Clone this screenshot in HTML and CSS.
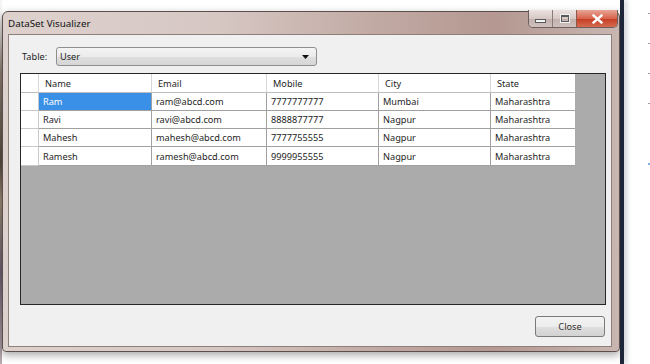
FILE: index.html
```html
<!DOCTYPE html>
<html lang="en">
<head>
    <meta charset="UTF-8">
    <title>DataSet Visualizer</title>
    <link rel="stylesheet" href="styles.css">
</head>
<body>

    <div class="desktop">
        <!-- Strip of the desktop behind the window -->
        <div class="backdrop-left"></div>

        <!-- Dialog window -->
        <div class="window">
            <div class="title-bar">
                <span class="title">DataSet Visualizer</span>
                <div class="caption-buttons">
                    <span class="cap-btn cap-min"><i></i></span>
                    <span class="cap-btn cap-max"><i></i></span>
                    <span class="cap-btn cap-close">
                        <svg width="11" height="10" viewBox="0 0 11 10">
                            <path d="M1.5 1.5 L9.5 8.5 M9.5 1.5 L1.5 8.5" stroke="#fff" stroke-width="2.4" stroke-linecap="square"/>
                        </svg>
                    </span>
                </div>
            </div>

            <div class="client">
                <div class="table-picker">
                    <label class="picker-label">Table:</label>
                    <div class="combo">
                        <span>User</span>
                        <svg class="combo-arrow" width="7" height="4" viewBox="0 0 7 4">
                            <path d="M0 0 H7 L3.5 4 Z" fill="#111"/>
                        </svg>
                    </div>
                </div>

                <!-- Data grid -->
                <div class="grid">
                    <div class="grid-table">
                        <div class="row head">
                            <span class="cell rowhead"></span>
                            <span class="cell c-name">Name</span>
                            <span class="cell c-email">Email</span>
                            <span class="cell c-mobile">Mobile</span>
                            <span class="cell c-city">City</span>
                            <span class="cell c-state">State</span>
                        </div>
                        <div class="row">
                            <span class="cell rowhead"></span>
                            <span class="cell c-name selected">Ram</span>
                            <span class="cell c-email">ram@abcd.com</span>
                            <span class="cell c-mobile">7777777777</span>
                            <span class="cell c-city">Mumbai</span>
                            <span class="cell c-state">Maharashtra</span>
                        </div>
                        <div class="row">
                            <span class="cell rowhead"></span>
                            <span class="cell c-name">Ravi</span>
                            <span class="cell c-email">ravi@abcd.com</span>
                            <span class="cell c-mobile">8888877777</span>
                            <span class="cell c-city">Nagpur</span>
                            <span class="cell c-state">Maharashtra</span>
                        </div>
                        <div class="row">
                            <span class="cell rowhead"></span>
                            <span class="cell c-name">Mahesh</span>
                            <span class="cell c-email">mahesh@abcd.com</span>
                            <span class="cell c-mobile">7777755555</span>
                            <span class="cell c-city">Nagpur</span>
                            <span class="cell c-state">Maharashtra</span>
                        </div>
                        <div class="row tall">
                            <span class="cell rowhead"></span>
                            <span class="cell c-name">Ramesh</span>
                            <span class="cell c-email">ramesh@abcd.com</span>
                            <span class="cell c-mobile">9999955555</span>
                            <span class="cell c-city">Nagpur</span>
                            <span class="cell c-state">Maharashtra</span>
                        </div>
                    </div>
                </div>

                <div class="actions">
                    <button class="close-button">Close</button>
                </div>
            </div>
        </div>

        <!-- Edge of the window behind -->
        <div class="edge"></div>
        <div class="side">
            <span class="mark"></span>
            <span class="mark"></span>
            <span class="mark"></span>
            <span class="mark"></span>
            <span class="mark blue"></span>
        </div>
    </div>

</body>
</html>
```

FILE: styles.css
```css
body {
    margin: 0;
    width: 650px;
    height: 364px;
    overflow: hidden;
    background-color: #ffffff;
    font-family: 'Noto Sans', 'Open Sans', sans-serif;
    color: #1e1e1e;
}

.desktop {
    display: flex;
    height: 364px;
}

.backdrop-left {
    width: 2px;
    flex-shrink: 0;
    background: linear-gradient(#f4f4f4 0%, #f4f4f4 4%, #8c7c70 20%, #5a4c40 45%, #9a8a74 55%, #6c6070 75%, #b8aab0 100%);
}

/* Window */

.window {
    width: 616px;
    height: 339px;
    margin-top: 11px;
    flex-shrink: 0;
    display: flex;
    flex-direction: column;
    border: 1px solid #5d4f4c;
    border-radius: 6px 6px 4px 4px;
    background: linear-gradient(90deg, #ddd1ce 0%, #d6c7c3 35%, #c2aaa4 60%, #b49891 80%, #c9b6b1 100%);
    box-shadow: 0 3px 8px rgba(0, 0, 0, 0.35);
}

.title-bar {
    display: flex;
    align-items: flex-start;
    height: 22px;
}

.title {
    font-size: 9.8px;
    color: #111;
    margin: 5px 0 0 5px;
}

.caption-buttons {
    display: flex;
    margin-left: auto;
    margin-right: 1px;
    margin-top: -2px;
    height: 17px;
    border: 1px solid #6d5f5c;
    border-top: none;
    border-radius: 0 0 5px 5px;
    overflow: hidden;
}

.cap-btn {
    display: flex;
    align-items: center;
    justify-content: center;
    background: linear-gradient(#ece3e1, #d6c8c5 50%, #c1b0ac 51%, #cfc1be);
}

.cap-min {
    width: 23px;
    border-right: 1px solid #8a7b78;
}

.cap-min i {
    display: block;
    width: 9px;
    height: 2px;
    margin-top: 5px;
    background: #f4f4f4;
    border: 1px solid #5b5b5b;
}

.cap-max {
    width: 23px;
    border-right: 1px solid #8a5a50;
}

.cap-max i {
    display: block;
    width: 6px;
    height: 4px;
    border: 1px solid #5b5b5b;
    border-top-width: 2px;
    outline: 1px solid #f2f2f2;
}

.cap-close {
    width: 40px;
    background: linear-gradient(#e8a596, #d8634c 50%, #c43c22 51%, #d66a4f);
}

/* Client area */

.client {
    flex: 1;
    display: flex;
    flex-direction: column;
    margin: 0 7px 4px 5px;
    padding: 0 5px 0 11px;
    background-color: #f0f0f0;
    border: 1px solid #8e7f7b;
}

.table-picker {
    display: flex;
    align-items: center;
    margin-top: 12px;
    padding-left: 2px;
    font-size: 9.2px;
}

.picker-label {
    width: 34px;
}

.combo {
    display: flex;
    align-items: center;
    justify-content: space-between;
    width: 249px;
    height: 17px;
    padding: 0 7px 0 3px;
    border: 1px solid #8f8f8f;
    border-radius: 3px;
    background: linear-gradient(#f4f4f4, #ebebeb 50%, #dedede 51%, #d6d6d6);
}

.grid {
    margin-top: 7px;
    height: 230px;
    border: 1px solid #262626;
    background-color: #ababab;
}

.grid-table {
    width: 554px;
    background-color: #ffffff;
}

.row {
    display: flex;
    height: 18px;
}

.row.head {
    height: 19px;
}

.row.tall {
    height: 19px;
}

.cell {
    box-sizing: border-box;
    display: flex;
    align-items: center;
    padding-left: 4px;
    font-size: 9.2px;
    white-space: nowrap;
    border-right: 1px solid #a0a0a0;
    border-bottom: 1px solid #a0a0a0;
}

.head .cell {
    padding-left: 6px;
    border-right-color: #d8d8d8;
    border-bottom-color: #bcbcbc;
}

.rowhead {
    width: 18px;
    border-right-color: #c8c8c8;
    border-bottom-color: #c8c8c8;
}

.c-name { width: 113px; }
.c-email { width: 115px; }
.c-mobile { width: 112px; }
.c-city { width: 112px; }
.c-state { width: 84px; border-right: none; }

.selected {
    background-color: #3a8fe6;
    color: #ffffff;
}

.actions {
    display: flex;
    justify-content: flex-end;
    margin-top: 11px;
    padding-right: 1px;
}

.close-button {
    width: 70px;
    height: 21px;
    font-family: 'Noto Sans', 'Open Sans', sans-serif;
    font-size: 9.2px;
    color: #333;
    border: 1px solid #7a7a7a;
    border-radius: 3px;
    background: linear-gradient(#f3f3f3, #ececec 50%, #dfdfdf 51%, #d2d2d2);
}

/* Behind the window */

.edge {
    width: 4px;
    flex-shrink: 0;
    background-color: #1d2538;
    box-shadow: 3px 0 4px rgba(120, 130, 150, 0.35);
}

.side {
    flex: 1;
    display: flex;
    flex-direction: column;
    align-items: flex-end;
    padding-top: 13px;
}

.mark {
    width: 2px;
    height: 1px;
    margin-bottom: 29px;
    background-color: #9a9a9a;
}

.mark.blue {
    margin-top: 30px;
    height: 2px;
    background-color: #7fb0e8;
}
```
